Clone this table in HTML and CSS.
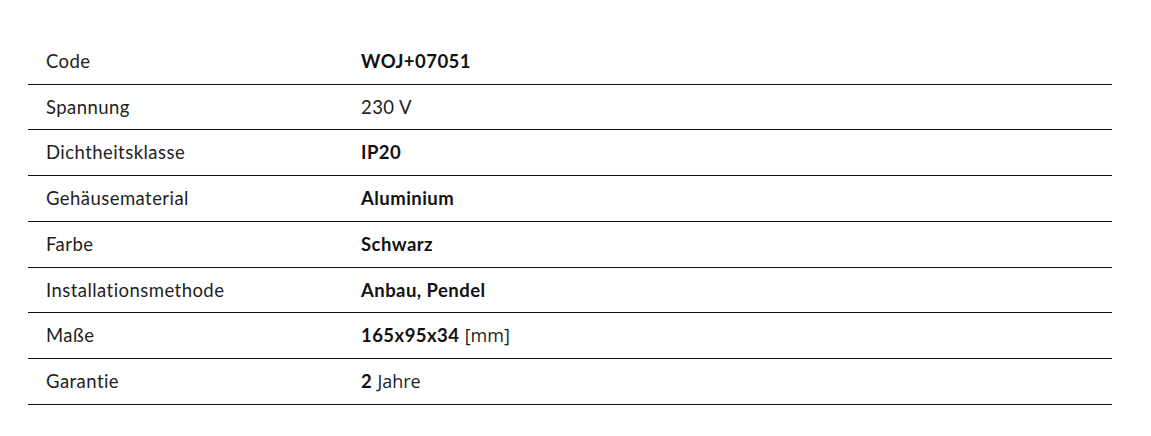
FILE: index.html
```html
<!DOCTYPE html>
<html lang="de">
<head>
<meta charset="utf-8">
<link rel="stylesheet" href="styles.css">
</head>
<body>
<div class="wrap">
<table class="specs">
<tr><td class="k">Code</td><td class="v"><b>WOJ+07051</b></td></tr>
<tr><td class="k">Spannung</td><td class="v">230 V</td></tr>
<tr><td class="k">Dichtheitsklasse</td><td class="v"><b>IP20</b></td></tr>
<tr><td class="k">Gehäusematerial</td><td class="v"><b>Aluminium</b></td></tr>
<tr><td class="k">Farbe</td><td class="v"><b>Schwarz</b></td></tr>
<tr><td class="k">Installationsmethode</td><td class="v"><b>Anbau, Pendel</b></td></tr>
<tr><td class="k">Maße</td><td class="v"><b>165x95x34</b> <span class="unit">[mm]</span></td></tr>
<tr><td class="k">Garantie</td><td class="v"><b>2</b> <span class="unit">Jahre</span></td></tr>
</table>
</div>
</body>
</html>
```
FILE: styles.css
```css
html, body {
  margin: 0;
  padding: 0;
  background: #fff;
}
.wrap {
  padding: 39px 39px 0 28px;
}
.specs {
  width: 100%;
  border-collapse: collapse;
  font-family: Lato, "Open Sans", sans-serif;
  font-size: 18.5px;
  letter-spacing: 0.45px;
  font-variant-ligatures: none;
  color: #1e1e1e;
}
.specs td {
  padding: 10px 0 10px 18px;
  line-height: 24.7px;
  border-bottom: 1px solid #111;
  vertical-align: middle;
}
.specs td.k {
  width: 297px;
}
.specs b {
  font-weight: 700;
  color: #111;
}
.unit {
  font-family: "Open Sans", sans-serif;
  font-size: 18px;
  line-height: 18px;
  letter-spacing: 0;
}
```
